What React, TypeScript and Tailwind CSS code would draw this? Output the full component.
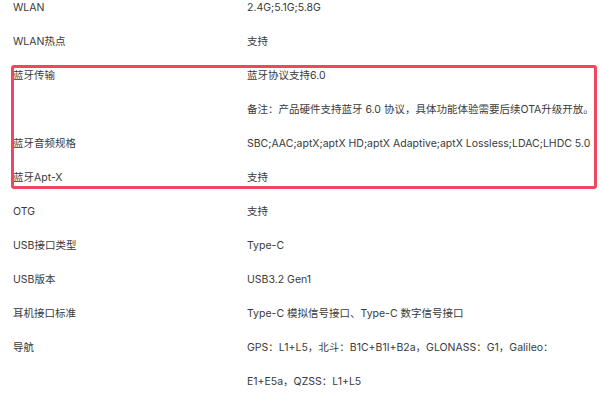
import React from 'react';

type Row = { label: string; values: string[] };

const rows: Row[] = [
  { label: 'WLAN', values: ['2.4G;5.1G;5.8G'] },
  { label: 'WLAN热点', values: ['支持'] },
  { label: '蓝牙传输', values: ['蓝牙协议支持6.0', '备注：产品硬件支持蓝牙 6.0 协议，具体功能体验需要后续OTA升级开放。'] },
  { label: '蓝牙音频规格', values: ['SBC;AAC;aptX;aptX HD;aptX Adaptive;aptX Lossless;LDAC;LHDC 5.0'] },
  { label: '蓝牙Apt-X', values: ['支持'] },
  { label: 'OTG', values: ['支持'] },
  { label: 'USB接口类型', values: ['Type-C'] },
  { label: 'USB版本', values: ['USB3.2 Gen1'] },
  { label: '耳机接口标准', values: ['Type-C 模拟信号接口、Type-C 数字信号接口'] },
  { label: '导航', values: ['GPS：L1+L5，北斗：B1C+B1I+B2a，GLONASS：G1，Galileo：', 'E1+E5a，QZSS：L1+L5'] },
];

const App: React.FC = () => {
  return (
    <div
      className="relative w-[600px] h-[395px] overflow-hidden bg-white text-[10.5px] text-[#3a3a3a]"
      style={{ fontFamily: '"Inter", "Noto Sans CJK SC", sans-serif' }}
    >
      <div className="-mt-[9px]">
        {rows.map((row) => (
          <div key={row.label} className="flex leading-[34px]">
            <div className="w-[247px] shrink-0 pl-[13px]">{row.label}</div>
            <div className="flex flex-col">
              {row.values.map((v) => (
                <span key={v} className="whitespace-nowrap">{v}</span>
              ))}
            </div>
          </div>
        ))}
      </div>

      {/* highlight annotation */}
      <div className="absolute left-[11px] top-[65px] w-[586px] h-[124px] border-[3px] border-[#f2455e] rounded-[3px]" />
    </div>
  );
};

export default App;
